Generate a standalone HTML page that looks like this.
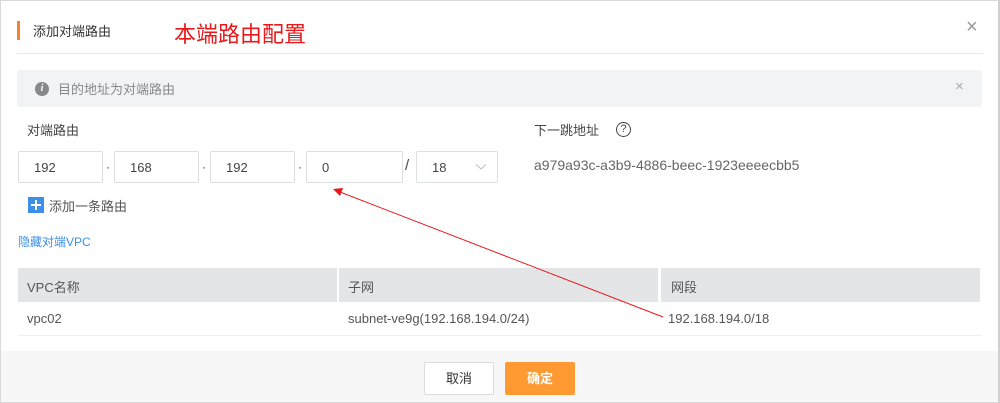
<!DOCTYPE html><html><head><meta charset="utf-8"><style>
*{margin:0;padding:0;box-sizing:border-box}
body{width:1000px;height:403px;overflow:hidden;background:#fff;font-family:"Liberation Sans","Noto Sans CJK SC",sans-serif;position:relative;color:#333}
.a{position:absolute}
.inp{position:absolute;top:151px;height:32px;border:1px solid #dcdfe6;border-radius:2px;font-size:13px;color:#444;padding:8px 0 0 15px}
.dot{position:absolute;top:160px;font-size:12px;color:#333}
</style></head><body>
<div class="a" style="left:0;top:0;width:1000px;height:403px;border:1px solid #d9d9d9;border-right:2px solid #d0d0d0"></div>
<div class="a" style="left:17px;top:21px;width:3px;height:19px;background:#f5822a"></div>
<div class="a" style="left:33px;top:21px;font-size:13px;color:#333">添加对端路由</div>
<div class="a" style="left:174px;top:17px;font-size:22px;color:#e8191b">本端路由配置</div>
<div class="a" style="left:966px;top:16px;font-size:20px;color:#999">×</div>
<div class="a" style="left:17px;top:53px;width:966px;height:1px;background:#e6e7ec"></div>
<div class="a" style="left:17px;top:70px;width:965px;height:37px;background:#f2f3f5;border-radius:3px"></div>
<div class="a" style="left:35px;top:82px;width:14px;height:14px;border-radius:50%;background:#888;color:#fff;font-size:10px;font-weight:bold;text-align:center;line-height:14px;font-style:italic;font-family:'Liberation Serif',serif">i</div>
<div class="a" style="left:58px;top:79px;font-size:13px;color:#888">目的地址为对端路由</div>
<div class="a" style="left:955px;top:78px;font-size:15px;color:#aaa">×</div>
<div class="a" style="left:27px;top:120px;font-size:13px;color:#444">对端路由</div>
<div class="inp" style="left:18px;width:85px">192</div>
<div class="dot" style="left:106px">·</div>
<div class="inp" style="left:114px;width:85px">168</div>
<div class="dot" style="left:202px">·</div>
<div class="inp" style="left:210px;width:85px">192</div>
<div class="dot" style="left:298px">·</div>
<div class="inp" style="left:306px;width:97px">0</div>
<div class="a" style="left:405px;top:157px;font-size:15px;color:#444">/</div>
<div class="inp" style="left:416px;width:82px">18</div>
<svg class="a" style="left:475px;top:163px" width="12" height="8"><path d="M1 1.5L6 6 11 1.5" stroke="#bbb" fill="none"/></svg>
<div class="a" style="left:534px;top:120px;font-size:13px;color:#444">下一跳地址</div>
<div class="a" style="left:616px;top:122px;width:15px;height:15px;border:1.5px solid #444;border-radius:50%;font-size:11px;text-align:center;line-height:12px;color:#444">?</div>
<div class="a" style="left:534px;top:157px;font-size:14px;color:#666">a979a93c-a3b9-4886-beec-1923eeeecbb5</div>
<div class="a" style="left:28px;top:197px;width:16px;height:16px;background:#3d8fe8"></div>
<div class="a" style="left:35px;top:200px;width:2px;height:10px;background:#fff"></div>
<div class="a" style="left:31px;top:204px;width:10px;height:2px;background:#fff"></div>
<div class="a" style="left:49px;top:196px;font-size:13px;color:#555">添加一条路由</div>
<div class="a" style="left:18px;top:233px;font-size:12px;color:#3d8fe8">隐藏对端VPC</div>
<div class="a" style="left:18px;top:268px;width:319px;height:34px;background:#e3e5e7"></div>
<div class="a" style="left:339px;top:268px;width:319px;height:34px;background:#e3e5e7"></div>
<div class="a" style="left:661px;top:268px;width:319px;height:34px;background:#e3e5e7"></div>
<div class="a" style="left:27px;top:277px;font-size:13px;color:#555">VPC名称</div>
<div class="a" style="left:348px;top:277px;font-size:13px;color:#555">子网</div>
<div class="a" style="left:671px;top:277px;font-size:13px;color:#555">网段</div>
<div class="a" style="left:27px;top:311px;font-size:13px;color:#555">vpc02</div>
<div class="a" style="left:348px;top:311px;font-size:13px;color:#555">subnet-ve9g(192.168.194.0/24)</div>
<div class="a" style="left:668px;top:311px;font-size:13px;color:#555">192.168.194.0/18</div>
<div class="a" style="left:18px;top:335px;width:964px;height:1px;background:#eee"></div>
<div class="a" style="left:1px;top:351px;width:997px;height:51px;background:#f7f7f7"></div>
<div class="a" style="left:424px;top:362px;width:70px;height:33px;background:#fff;border:1px solid #ddd;border-radius:2px;font-size:13px;text-align:center;line-height:31px;color:#333">取消</div>
<div class="a" style="left:505px;top:362px;width:70px;height:33px;background:#ff9a33;border-radius:2px;font-size:13px;text-align:center;line-height:33px;color:#fff;font-weight:bold">确定</div>
<svg class="a" style="left:0;top:0" width="1000" height="403"><line x1="663" y1="317" x2="340" y2="192" stroke="#e8191b" stroke-width="1"/><path d="M333 189L343 188L340 196Z" fill="#e8191b"/></svg>
</body></html>
